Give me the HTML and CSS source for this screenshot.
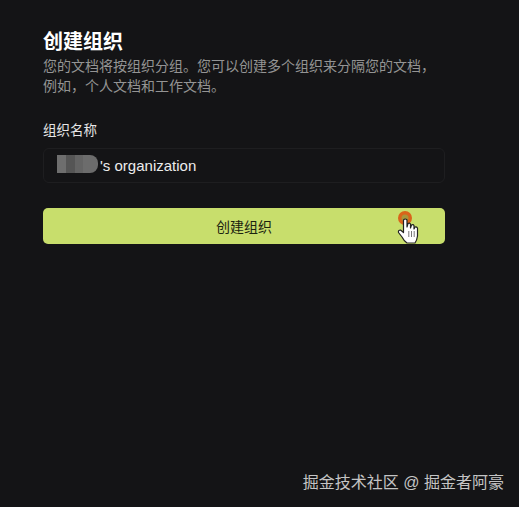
FILE: index.html
```html
<!DOCTYPE html>
<html>
<head>
    <meta charset="utf-8">
    <link rel="stylesheet" href="styles.css">
</head>
<body>
    <div class="page">
        <h2>创建组织</h2>
        <p class="intro">您的文档将按组织分组。您可以创建多个组织来分隔您的文档&#xFF0C;<br>例如&#xFF0C;个人文档和工作文档。</p>

        <form class="org-form">
            <label for="orgName">组织名称</label>
            <div class="name-field">
                <span class="blur">
                    <i class="b1"></i><i class="b2"></i><i class="b3"></i><i class="b4"></i>
                </span>
                <input type="text" id="orgName" value="'s organization">
            </div>
            <button type="button" class="btn">
                创建组织
                <span class="cursor">
                    <svg width="24" height="34" viewBox="0 0 24 34">
                        <circle cx="8" cy="7" r="7" fill="#d9641a"/>
                        <circle cx="8" cy="7" r="3.500" fill="#a8963a"/>
                        <path d="M10 32 Q7 30 5 26 L1.500 21.500 Q1 19 3.500 19 L6.500 21.500 L6.500 9 Q8.200 7 10 9 L10 16 L11 12.500 Q12.600 11.500 13.500 13 L13.500 17 L14.500 14 Q16 13 17 14.500 L17 18 L18 16 Q19.500 15.500 20.500 17 L20.500 25 Q20 29 18 32 Z" fill="#fff" stroke="#222" stroke-width="1.200" stroke-linejoin="round"/>
                        <path d="M11.800 20 V26 M14.500 20 V26 M17.200 20 V26" stroke="#555" stroke-width="0.800"/>
                    </svg>
                </span>
            </button>
        </form>

        <div class="watermark">掘金技术社区 @ 掘金者阿豪</div>
    </div>
</body>
</html>
```

FILE: styles.css
```css
html, body {
    margin: 0;
    height: 100%;
}

body {
    background-color: #141416;
    font-family: "Liberation Sans", "Noto Sans CJK SC", sans-serif;
    overflow: hidden;
}

.page {
    box-sizing: border-box;
    height: 507px;
    padding: 30px 74px 0 43px;
    position: relative;
}

h2 {
    margin: 0;
    color: #fff;
    font-size: 20px;
    line-height: 24px;
    font-weight: 700;
}

.intro {
    margin: 2px 0 0;
    color: #949494;
    font-size: 14px;
    line-height: 20px;
}

.org-form {
    margin-top: 25px;
}

.org-form label {
    display: block;
    color: #e6e6e6;
    font-size: 13.500px;
    line-height: 20px;
    margin-bottom: 7px;
}

.name-field {
    position: relative;
    margin-bottom: 25px;
}

.name-field input {
    box-sizing: border-box;
    display: block;
    width: 100%;
    height: 35px;
    padding: 0 10px 0 56px;
    background: transparent;
    border: 1px solid #1e1e20;
    border-radius: 6px;
    color: #ececec;
    font-family: "Liberation Sans", sans-serif;
    font-size: 15px;
    outline: none;
}

/* mosaic over the name */
.blur {
    position: absolute;
    left: 14px;
    top: 7px;
    display: flex;
    height: 18px;
}

.blur i {
    display: block;
    height: 100%;
}

.b1 { width: 9px; background-color: #6e6e6e; }
.b2 { width: 9px; background-color: #555; }
.b3 { width: 8px; background-color: #646464; }
.b4 { width: 15px; background-color: #6c6c6c; border-radius: 0 8px 8px 0; }

.btn {
    display: block;
    position: relative;
    width: 100%;
    height: 36px;
    background-color: #c8de6c;
    border: none;
    border-radius: 5px;
    color: #1c2410;
    font-family: inherit;
    font-size: 14px;
}

.cursor {
    position: absolute;
    left: 354px;
    top: 3px;
    line-height: 0;
}

.watermark {
    position: absolute;
    right: 15px;
    bottom: 13px;
    color: #c4c4c4;
    font-size: 16px;
    line-height: 22px;
}
```
